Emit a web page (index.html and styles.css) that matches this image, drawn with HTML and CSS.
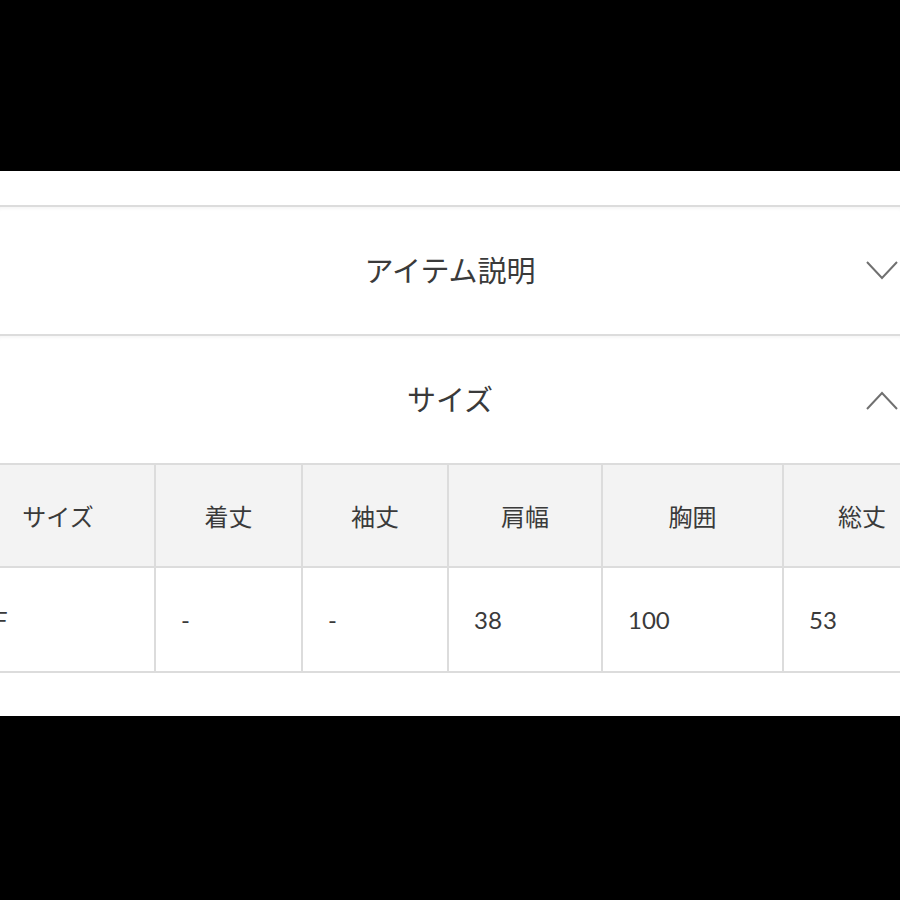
FILE: index.html
```html
<!DOCTYPE html>
<html lang="ja">
<head>
<meta charset="utf-8">
<title>サイズ</title>
<link rel="stylesheet" href="styles.css">
</head>
<body>
<div class="sheet">
  <div class="acc-head">
    <span></span>
    <h2 class="acc-title">アイテム説明</h2>
    <svg class="chev" width="32" height="20" viewBox="0 0 32 20"><path d="M1 1 L16 17 L31 1" fill="none" stroke="#707070" stroke-width="2"/></svg>
  </div>
  <div class="acc-head">
    <span></span>
    <h2 class="acc-title">サイズ</h2>
    <svg class="chev" width="32" height="20" viewBox="0 0 32 20"><path d="M1 19 L16 3 L31 19" fill="none" stroke="#707070" stroke-width="2"/></svg>
  </div>
  <div class="table-wrap">
    <table class="size-table">
      <colgroup>
        <col class="c1"><col class="c2"><col class="c3"><col class="c4"><col class="c5"><col class="c6">
      </colgroup>
      <thead>
        <tr><th>サイズ</th><th>着丈</th><th>袖丈</th><th>肩幅</th><th>胸囲</th><th>総丈</th></tr>
      </thead>
      <tbody>
        <tr><td class="first">F</td><td>-</td><td>-</td><td>38</td><td>100</td><td>53</td></tr>
      </tbody>
    </table>
  </div>
</div>
</body>
</html>
```
FILE: styles.css
```css
html, body {
  margin: 0;
  padding: 0;
  background: #000;
  overflow: hidden;
}
body {
  font-family: Lato, "Noto Sans CJK JP", sans-serif;
  color: #333;
}
.sheet {
  background: #fff;
  margin-top: 171px;
  height: 545px;
  padding-top: 34px;
  box-sizing: border-box;
  overflow: hidden;
}
.acc-head {
  border-top: 2px solid #dcdcdc;
  box-shadow: inset 0 4px 4px -3px rgba(0,0,0,0.06);
  height: 127px;
  display: grid;
  grid-template-columns: 1fr auto 1fr;
  align-items: center;
}
.acc-title {
  margin: 0 0 3px;
  font-weight: 400;
  font-size: 29px;
  color: #3a3a3a;
  font-family: "Noto Sans CJK JP", sans-serif;
  letter-spacing: 0;
}
.chev {
  justify-self: end;
  margin-right: 2px;
}
.table-wrap {
  margin-left: -40px;
  width: 980px;
}
.size-table {
  border-collapse: collapse;
  table-layout: fixed;
  width: 980px;
}
.c1 { width: 194px; }
.c2 { width: 147px; }
.c3 { width: 146px; }
.c4 { width: 154px; }
.c5 { width: 181px; }
.c6 { width: 158px; }
.size-table th, .size-table td {
  border: 2px solid #dcdcdc;
  font-size: 24px;
  font-weight: 400;
  color: #3a3a3a;
  height: 101px;
  padding: 0;
}
.size-table th {
  background: #f3f3f3;
  text-align: center;
  font-family: "Noto Sans CJK JP", sans-serif;
}
.size-table td {
  height: 103px;
  text-align: left;
  padding-left: 25px;
  font-family: Lato, sans-serif;
}
.size-table td.first {
  padding-left: 32px;
}
```
